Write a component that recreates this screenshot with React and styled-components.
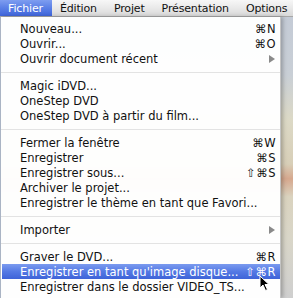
import React from "react";
import styled, { createGlobalStyle } from "styled-components";

const GlobalStyle = createGlobalStyle`
  html, body {
    margin: 0;
    padding: 0;
    width: 293px;
    height: 298px;
    overflow: hidden;
  }
  body {
    background: linear-gradient(180deg, #c3cad6 0%, #c9cfd6 25%, #dcd9c6 40%, #d8cfb8 55%, #d6a88e 60%, #dad3bf 66%, #d9d6c8 80%, #cfcfcf 100%);
    font-family: "DejaVu Sans", "Liberation Sans", sans-serif;
  }
`;

const Screen = styled.div`
  position: relative;
  width: 293px;
  height: 298px;
  display: flex;
  flex-direction: column;
`;

const MenuBar = styled.div`
  height: 16px;
  display: flex;
  align-items: stretch;
  background: linear-gradient(180deg, #f7f7f7 0%, #e9e9e9 50%, #d9d9d9 100%);
  border-bottom: 1px solid #a8a8a8;
  white-space: nowrap;
  overflow: hidden;
`;

const BarItem = styled.div`
  display: flex;
  align-items: center;
  padding: 0 9px 0 8px;
  font-size: 11px;
  letter-spacing: -0.15px;
  color: ${(p) => (p.$active ? "#fff" : "#111")};
  background: ${(p) =>
    p.$active ? "linear-gradient(180deg, #7e9df0 0%, #5a7fe6 50%, #3f66dc 100%)" : "transparent"};
`;

const Body = styled.div`
  flex: 1;
  display: flex;
  align-items: flex-start;
`;

const DropMenu = styled.div`
  width: 281px;
  height: 100%;
  box-sizing: border-box;
  padding-top: 4px;
  background: rgba(255, 255, 255, 0.97);
  border-left: 1px solid #aab4c4;
  border-right: 1px solid #c4c4c4;
  box-shadow: 2px 0 4px rgba(0, 0, 0, 0.25);
  display: flex;
  flex-direction: column;
`;

const Item = styled.div`
  height: 15px;
  display: flex;
  align-items: center;
  justify-content: space-between;
  padding: 0 4px 0 18px;
  margin: 0 0 0 1px;
  font-size: 11.5px;
  white-space: nowrap;
  color: ${(p) => (p.$active ? "#fff" : "#111")};
  background: ${(p) =>
    p.$active ? "linear-gradient(180deg, #7b9bef 0%, #5479e4 50%, #3e63d8 100%)" : "transparent"};
`;

const Shortcut = styled.span`
  font-size: 11.5px;
  letter-spacing: 0.5px;
`;

const Arrow = styled.span`
  width: 0;
  height: 0;
  margin-right: 1px;
  border-top: 4px solid transparent;
  border-bottom: 4px solid transparent;
  border-left: 6px solid #8a8a8a;
`;

const Separator = styled.div`
  height: 12px;
  display: flex;
  align-items: center;
  &::after {
    content: "";
    flex: 1;
    height: 1px;
    background: #e3e3e3;
  }
`;

const Cursor = styled.svg`
  position: absolute;
  left: 259px;
  top: 275px;
`;

const menu = [
  { label: "Nouveau...", key: "⌘N" },
  { label: "Ouvrir...", key: "⌘O" },
  { label: "Ouvrir document récent", sub: true },
  "-",
  { label: "Magic iDVD..." },
  { label: "OneStep DVD" },
  { label: "OneStep DVD à partir du film..." },
  "-",
  { label: "Fermer la fenêtre", key: "⌘W" },
  { label: "Enregistrer", key: "⌘S" },
  { label: "Enregistrer sous...", key: "⇧⌘S" },
  { label: "Archiver le projet..." },
  { label: "Enregistrer le thème en tant que Favori..." },
  "-",
  { label: "Importer", sub: true },
  "-",
  { label: "Graver le DVD...", key: "⌘R" },
  { label: "Enregistrer en tant qu'image disque...", key: "⇧⌘R", active: true },
  { label: "Enregistrer dans le dossier VIDEO_TS..." },
];

export default function App() {
  return (
    <Screen>
      <GlobalStyle />
      <MenuBar>
        <BarItem $active>Fichier</BarItem>
        <BarItem>Édition</BarItem>
        <BarItem>Projet</BarItem>
        <BarItem>Présentation</BarItem>
        <BarItem>Options</BarItem>
      </MenuBar>
      <Body>
        <DropMenu>
          {menu.map((m, i) =>
            m === "-" ? (
              <Separator key={i} />
            ) : (
              <Item key={i} $active={m.active}>
                <span>{m.label}</span>
                {m.key && <Shortcut>{m.key}</Shortcut>}
                {m.sub && <Arrow />}
              </Item>
            )
          )}
        </DropMenu>
      </Body>
      <Cursor width="12" height="17" viewBox="0 0 12 17">
        <path d="M1 1 L1 13 L4 10 L6.5 15.5 L8.5 14.5 L6 9.5 L10 9.5 Z" fill="#000" stroke="#fff" strokeWidth="1" />
      </Cursor>
    </Screen>
  );
}
